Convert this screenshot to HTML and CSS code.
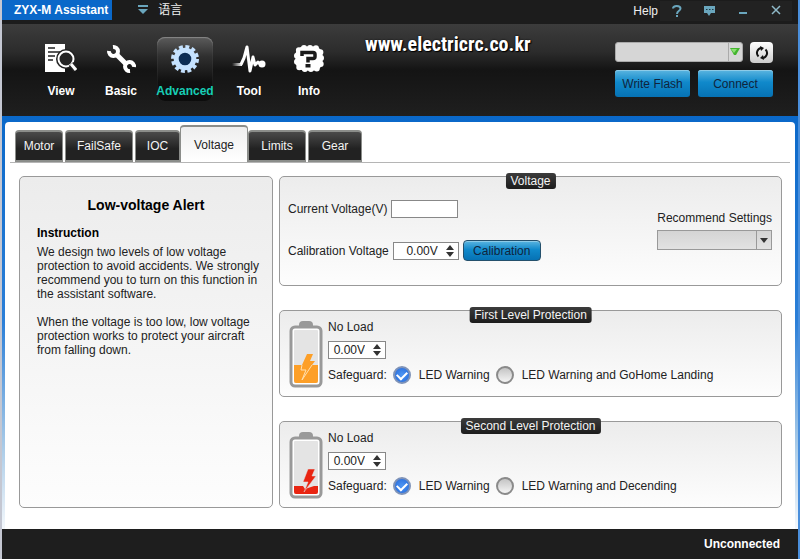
FILE: index.html
```html
<!DOCTYPE html>
<html lang="en">
<head>
  <meta charset="UTF-8" />
  <title>ZYX-M Assistant</title>
  <link rel="stylesheet" href="styles.css">
</head>
<body>

  <div class="window">
    <header class="titlebar">
      <h1 class="app-name">ZYX-M Assistant</h1>
      <button type="button" class="language">
        <svg width="10" height="10" viewBox="0 0 10 10"><path d="M0 1h10" stroke="#6aa6bd" stroke-width="2" /><path d="M0 4h10L5 9z" fill="#6aa6bd" /></svg>
        <span>语言</span>
      </button>
      <div class="window-buttons">
        <span class="help-label">Help</span>
        <button type="button" aria-label="Help">
          <svg width="12" height="14" viewBox="0 0 12 14" fill="none" stroke="#6aa6bd" stroke-width="2"><path d="M2 4.500C2 1 9.500 1 9.500 4.500C9.500 7 6 6.500 6 10" /><path d="M6 11v2" /></svg>
        </button>
        <button type="button" aria-label="Feedback">
          <svg width="13" height="12" viewBox="0 0 13 12"><path d="M1 1h11v7H8l-2 3-2-3H1z" fill="#6aa6bd" /><path d="M3 4.500h1.500M6 4.500h1.500M9 4.500h1.500" stroke="#1e3a45" /></svg>
        </button>
        <button type="button" aria-label="Minimize">
          <svg width="10" height="12" viewBox="0 0 10 12"><path d="M1 8h8" stroke="#6aa6bd" stroke-width="2" /></svg>
        </button>
        <button type="button" aria-label="Close">
          <svg width="10" height="12" viewBox="0 0 10 12"><path d="M1 1l8 8M9 1l-8 8" stroke="#8fb9c8" stroke-width="1.500" /></svg>
        </button>
      </div>
    </header>

    <div class="toolbar">
      <nav class="main-nav">
        <button type="button" class="nav-item">
          <svg width="32" height="32" viewBox="0 0 32 32">
            <path d="M0 1h20v28H0z" fill="#fff" />
            <path d="M3 5h7M3 9h14M3 13h7M3 17h5" stroke="#222" stroke-width="1.500" />
            <circle cx="21" cy="16" r="10" fill="#222" />
            <circle cx="21" cy="16" r="7.500" fill="#252525" stroke="#fff" stroke-width="2" />
            <path d="M26 21l5 6" stroke="#222" stroke-width="6" />
            <path d="M26 21l5 6" stroke="#fff" stroke-width="3" />
          </svg>
          <span>View</span>
        </button>
        <button type="button" class="nav-item">
          <svg width="32" height="32" viewBox="0 0 32 32" fill="none" stroke="#fff" stroke-width="4">
            <path d="M4 8A4.500 4.500 0 1 0 8 4" />
            <path d="M11 11L22 22" stroke-width="5" />
            <path d="M29 24A4.500 4.500 0 1 0 25 28" />
          </svg>
          <span>Basic</span>
        </button>
        <button type="button" class="nav-item active">
          <svg width="32" height="32" viewBox="0 0 32 32">
            <circle cx="16" cy="16" r="12" fill="none" stroke="#c5e2ff" stroke-width="4" stroke-dasharray="3.800 2.483" />
            <circle cx="16" cy="16" r="8.800" fill="#0c2d55" stroke="#c5e2ff" stroke-width="5" />
          </svg>
          <span>Advanced</span>
        </button>
        <button type="button" class="nav-item">
          <svg width="34" height="32" viewBox="0 0 34 32">
            <defs><linearGradient id="fade"><stop stop-color="#fff" stop-opacity="0" /><stop offset="1" stop-color="#fff" /></linearGradient></defs>
            <rect x="0" y="20" width="10" height="3" fill="url(#fade)" />
            <path d="M9 21.500L12 15L15 4L18 28L21 14L23 22L26 19L28 21" fill="none" stroke="#fff" stroke-width="3" stroke-linejoin="round" />
            <circle cx="30" cy="21" r="3.500" fill="#fff" />
          </svg>
          <span>Tool</span>
        </button>
        <button type="button" class="nav-item">
          <svg width="32" height="32" viewBox="0 0 32 32">
            <rect x="4" y="5" width="24" height="21" rx="7" fill="#fff" stroke="#fff" stroke-width="3" />
            <rect x="4" y="5" width="24" height="21" rx="7" fill="none" stroke="#fff" stroke-width="6" stroke-linecap="round" stroke-dasharray="0 6" />
            <path d="M9 13V9.500h11q2 0 2 2v2q0 2-2 2h-5v4" fill="none" stroke="#1a1a1a" stroke-width="3.500" />
            <path d="M15 21v3.500" stroke="#1a1a1a" stroke-width="5" />
          </svg>
          <span>Info</span>
        </button>
      </nav>

      <p class="site">www.electricrc.co.kr</p>

      <div class="connection">
        <div class="port-row">
          <div class="port">
            <select aria-label="Port"><option></option></select>
            <svg width="12" height="8" viewBox="0 0 12 8"><path d="M1 0h10L7 7H5z" fill="#43b52e" /><path d="M2 1h6L5 5z" fill="#8be072" /></svg>
          </div>
          <button type="button" class="refresh" aria-label="Refresh">
            <svg width="16" height="16" viewBox="0 0 16 16"><path d="M7 3a5 5 0 0 0-2.500 8.500M9 13a5 5 0 0 0 2.500-8.500" fill="none" stroke="#111" stroke-width="2" /><path d="M6 1l4 2-3 3zM10 15l-4-2 3-3z" fill="#111" /></svg>
          </button>
        </div>
        <div class="action-row">
          <button type="button" class="blue-button">Write Flash</button>
          <button type="button" class="blue-button">Connect</button>
        </div>
      </div>
    </div>

    <main class="content">
      <div class="page">
        <div class="tabs" role="tablist">
          <button type="button" role="tab" class="tab motor">Motor</button>
          <button type="button" role="tab" class="tab failsafe">FailSafe</button>
          <button type="button" role="tab" class="tab ioc">IOC</button>
          <button type="button" role="tab" class="tab selected" aria-selected="true">Voltage</button>
          <button type="button" role="tab" class="tab limits">Limits</button>
          <button type="button" role="tab" class="tab gear">Gear</button>
        </div>

        <div class="panels">
          <section class="panel instructions">
            <h2>Low-voltage Alert</h2>
            <h3>Instruction</h3>
            <p>We design two levels of low voltage protection to avoid accidents. We strongly recommend you to turn on this function in the assistant software.</p>
            <p>When the voltage is too low, low voltage protection works to protect your aircraft from falling down.</p>
          </section>

          <div class="settings">
            <section class="panel voltage">
              <h2 class="caption">Voltage</h2>
              <div class="voltage-fields">
                <div class="field">
                  <label for="current">Current Voltage(V)</label>
                  <input type="text" id="current" class="box" />
                </div>
                <div class="field">
                  <label for="calibration">Calibration Voltage</label>
                  <div class="spin wide">
                    <input type="text" id="calibration" value="0.00V" />
                    <svg width="8" height="12" viewBox="0 0 8 12"><path d="M0 5l4-5 4 5zM0 7h8l-4 5z" fill="#333" /></svg>
                  </div>
                  <button type="button" class="blue-button calibrate">Calibration</button>
                </div>
              </div>
              <div class="recommend">
                <label for="recommend">Recommend Settings</label>
                <div class="recommend-select">
                  <select id="recommend"><option></option></select>
                  <svg width="8" height="5" viewBox="0 0 8 5"><path d="M0 0h8L4 5z" fill="#333" /></svg>
                </div>
              </div>
            </section>

            <section class="panel level">
              <h2 class="caption">First Level Protection</h2>
              <svg width="34" height="68" viewBox="0 0 34 68">
                <path d="M10 5q0-4 4-4h6q4 0 4 4v2H10z" fill="#999" />
                <rect x="2" y="7" width="30" height="59" rx="4" fill="#fff" stroke="#999" stroke-width="3" />
                <rect x="5" y="10" width="24" height="53" rx="1" fill="#e4e4e4" />
                <path d="M5 45h8l5-11h6l-3 7h5l-3 4h6v16q0 2-2 2H7q-2 0-2-2z" fill="#fd9f27" />
                <path d="M13 45l-1 5h5l-4 10L23 45" fill="none" stroke="#ffe0b0" />
              </svg>
              <div class="level-fields">
                <label for="load1">No Load</label>
                <div class="spin">
                  <input type="text" id="load1" value="0.00V" />
                  <svg width="8" height="12" viewBox="0 0 8 12"><path d="M0 5l4-5 4 5zM0 7h8l-4 5z" fill="#333" /></svg>
                </div>
                <div class="safeguard">
                  <span>Safeguard:</span>
                  <label><input type="radio" name="guard1" checked /> LED Warning</label>
                  <label><input type="radio" name="guard1" /> LED Warning and GoHome Landing</label>
                </div>
              </div>
            </section>

            <section class="panel level">
              <h2 class="caption">Second Level Protection</h2>
              <svg width="34" height="68" viewBox="0 0 34 68">
                <path d="M10 5q0-4 4-4h6q4 0 4 4v2H10z" fill="#999" />
                <rect x="2" y="7" width="30" height="59" rx="4" fill="#fff" stroke="#999" stroke-width="3" />
                <rect x="5" y="10" width="24" height="53" rx="1" fill="#e4e4e4" />
                <path d="M5 55h9l2 3 9-3h4v6q0 2-2 2H7q-2 0-2-2z" fill="#e92512" />
                <path d="M19 38h7l-3 7h4L15 61l4-10h-5z" fill="#e92512" stroke="#e4e4e4" stroke-width="0.500" />
              </svg>
              <div class="level-fields">
                <label for="load2">No Load</label>
                <div class="spin">
                  <input type="text" id="load2" value="0.00V" />
                  <svg width="8" height="12" viewBox="0 0 8 12"><path d="M0 5l4-5 4 5zM0 7h8l-4 5z" fill="#333" /></svg>
                </div>
                <div class="safeguard">
                  <span>Safeguard:</span>
                  <label><input type="radio" name="guard2" checked /> LED Warning</label>
                  <label><input type="radio" name="guard2" /> LED Warning and Decending</label>
                </div>
              </div>
            </section>
          </div>
        </div>
      </div>
    </main>

    <footer class="statusbar">Unconnected</footer>
  </div>

</body>
</html>
```
FILE: styles.css
```css
* {
  box-sizing: border-box;
}

body {
  margin: 0;
  padding: 0 2px;
  background: linear-gradient(90deg, #c4c7d2 50%, #4a8fdc 50%);
  color: #222;
  font-family: "Liberation Sans", "Noto Sans CJK SC", Arial, sans-serif;
  font-size: 12px;
  line-height: 14px;
}

h1, h2, h3, p {
  margin: 0;
}

button, input, select {
  margin: 0;
  padding: 0;
  border: 0;
  font: inherit;
  color: inherit;
}

svg {
  flex: none;
}

.window {
  display: flex;
  flex-direction: column;
  min-height: 100vh;
  background: #1e1e1e;
}

/* title bar */
.titlebar {
  display: flex;
  align-items: flex-start;
  height: 24px;
  background: #1c1c1c;
  color: #eee;
}

.app-name {
  height: 20px;
  padding: 0 4px 0 12px;
  background: #0a68c9;
  color: #fff;
  font-size: 12px;
  line-height: 20px;
}

.language {
  display: flex;
  align-items: center;
  gap: 10px;
  height: 20px;
  margin-left: 26px;
  background: none;
}

.window-buttons {
  display: flex;
  align-items: center;
  margin-left: auto;
  padding-right: 6px;
}

.help-label {
  padding: 0 2px;
  line-height: 22px;
}

.window-buttons button {
  display: flex;
  align-items: center;
  justify-content: center;
  width: 33px;
  height: 20px;
  background: #222;
}

/* toolbar */
.toolbar {
  display: flex;
  height: 92px;
  padding: 0 25px 0 29px;
  background: linear-gradient(#3c3c3c, #2c2c2c 30%, #141414 50%, #1f1f1f);
}

.main-nav {
  display: flex;
  align-items: flex-start;
  padding-top: 13px;
}

.nav-item {
  display: flex;
  flex-direction: column;
  align-items: center;
  gap: 9px;
  width: 60px;
  height: 64px;
  padding-top: 6px;
  background: none;
  color: #fff;
  font-weight: bold;
}

.nav-item.active {
  width: 56px;
  margin: 0 6px;
  border-radius: 8px;
  background: linear-gradient(#5c5c5c, #303030 30%, #101010 70%, #0c0c0c);
  box-shadow: inset 0 1px 1px #888;
  color: #17cdb5;
}

.site {
  margin: 8px 0 0 26px;
  color: #fff;
  font-family: "Liberation Sans Narrow", "Roboto Condensed", "Open Sans Condensed", "Liberation Sans", sans-serif;
  font-size: 20px;
  font-weight: bold;
  line-height: 24px;
  text-shadow: 0 0 2px #000, 1px 1px 1px #000;
}

.connection {
  display: flex;
  flex-direction: column;
  gap: 7px;
  margin-left: auto;
  padding-top: 18px;
}

.port-row {
  display: flex;
  gap: 7px;
}

.port {
  display: flex;
  align-items: center;
  flex: 1;
  height: 20px;
  padding-right: 1px;
  border: 1px solid #aaa;
  border-radius: 3px;
  background: #d6d6d6;
}

.port select {
  flex: 1;
  height: 18px;
  border-right: 1px solid #aaa;
  appearance: none;
  background: none;
}

.refresh {
  display: flex;
  align-items: center;
  justify-content: center;
  width: 23px;
  height: 21px;
  border-radius: 4px;
  background: linear-gradient(#fff, #ccc);
}

.action-row {
  display: flex;
  gap: 8px;
}

.blue-button {
  width: 75px;
  height: 27px;
  border-radius: 3px;
  background: linear-gradient(#5bb5e0, #1089cb 45%, #0672b4);
  box-shadow: inset 0 1px 0 #8ccbe8;
  color: #10243c;
}

/* content */
.content {
  flex: 1;
  display: flex;
  padding: 6px 3px 0;
  background: linear-gradient(#0a68c9, #2b7fd8 50%, #a9cbe8 80%, #f4f8fc);
}

.page {
  flex: 1;
  padding: 3px 5px 21px;
  border-radius: 4px 4px 0 0;
  background: #fff;
}

.tabs {
  display: flex;
  align-items: flex-end;
  gap: 2px;
  height: 38px;
  padding-left: 5px;
  border-bottom: 1px solid #b5b5b5;
}

.tab {
  height: 32px;
  border: 1px solid #8b8d8a;
  border-width: 2px 1px;
  border-radius: 4px 4px 0 0;
  background: linear-gradient(#4a4a4a, #222 60%);
  color: #f4f4f4;
}

.motor {
  width: 48px;
}

.failsafe {
  width: 68px;
}

.ioc {
  width: 45px;
}

.tab.selected {
  width: 68px;
  height: 37px;
  margin: 0 -2px;
  border-bottom: 0;
  background: linear-gradient(#eee, #fff);
  color: #222;
}

.limits {
  width: 58px;
}

.gear {
  width: 54px;
}

.panels {
  display: flex;
  gap: 6px;
  padding: 13px 8px 0 9px;
}

.panel {
  position: relative;
  border: 1px solid #999;
  border-radius: 5px;
  background: linear-gradient(#ececec, #fdfdfd);
}

.instructions {
  width: 254px;
  padding: 20px 10px 0 17px;
}

.instructions h2 {
  margin-bottom: 13px;
  padding-right: 7px;
  color: #000;
  font-size: 14px;
  line-height: 16px;
  text-align: center;
}

.instructions h3 {
  margin-bottom: 5px;
  color: #000;
  font-size: 12px;
}

.instructions p {
  margin-bottom: 14px;
}

.settings {
  display: flex;
  flex: 1;
  flex-direction: column;
  gap: 24px;
}

/* dark label lying on the top border of a panel */
.caption {
  position: absolute;
  top: -4px;
  left: 50%;
  padding: 0 5px;
  border-radius: 3px;
  background: linear-gradient(#3c3c3c, #1c1c1c);
  color: #f4f4f4;
  font-size: 12px;
  font-weight: normal;
  line-height: 16px;
  white-space: nowrap;
  transform: translateX(-50%);
}

.voltage {
  display: flex;
  justify-content: space-between;
  padding: 23px 9px 24px 8px;
}

.voltage-fields {
  display: flex;
  flex-direction: column;
  gap: 22px;
}

.field {
  display: flex;
  align-items: center;
  gap: 4px;
}

.box {
  width: 67px;
  height: 18px;
  border: 1px solid #888;
  background: #fff;
}

.spin {
  display: flex;
  align-items: center;
  width: 58px;
  height: 18px;
  padding-right: 4px;
  border: 1px solid #888;
  background: #fff;
}

.spin.wide {
  width: 66px;
}

.spin input {
  flex: 1;
  min-width: 0;
  padding-right: 8px;
  background: none;
  text-align: right;
}

.calibrate {
  width: 78px;
  height: 21px;
  border: 1px solid #24506c;
  border-radius: 4px;
}

.recommend {
  display: flex;
  flex-direction: column;
  gap: 5px;
  padding-top: 11px;
  white-space: nowrap;
}

.recommend-select {
  display: flex;
  align-items: center;
  height: 20px;
  padding-right: 3px;
  border: 1px solid #999;
  background: linear-gradient(#d4d4d4, #e2e2e2);
}

.recommend-select select {
  flex: 1;
  height: 18px;
  margin-right: 3px;
  border-right: 1px solid #999;
  appearance: none;
  background: none;
}

.level {
  display: flex;
  gap: 5px;
  padding: 9px 8px 8px 9px;
}

.level-fields {
  display: flex;
  flex-direction: column;
  align-items: flex-start;
  gap: 7px;
}

.safeguard {
  display: flex;
  align-items: center;
  gap: 6px;
}

.safeguard label {
  display: flex;
  align-items: center;
  gap: 8px;
}

.safeguard input {
  display: flex;
  align-items: center;
  justify-content: center;
  width: 18px;
  height: 18px;
  border: 2px solid #8a8a8a;
  border-radius: 50%;
  appearance: none;
  background: linear-gradient(#c4c4c4, #f4f4f4);
}

.safeguard input:checked {
  border-color: #7f93b8;
  background: radial-gradient(#4e96f4, #2468d8);
}

.safeguard input:checked::before {
  content: "";
  width: 8px;
  height: 5px;
  margin-bottom: 2px;
  border: solid #fff;
  border-width: 0 0 2px 2px;
  transform: rotate(-45deg);
}

/* status bar */
.statusbar {
  height: 31px;
  padding-right: 18px;
  color: #fff;
  font-weight: bold;
  line-height: 30px;
  text-align: right;
}
```
